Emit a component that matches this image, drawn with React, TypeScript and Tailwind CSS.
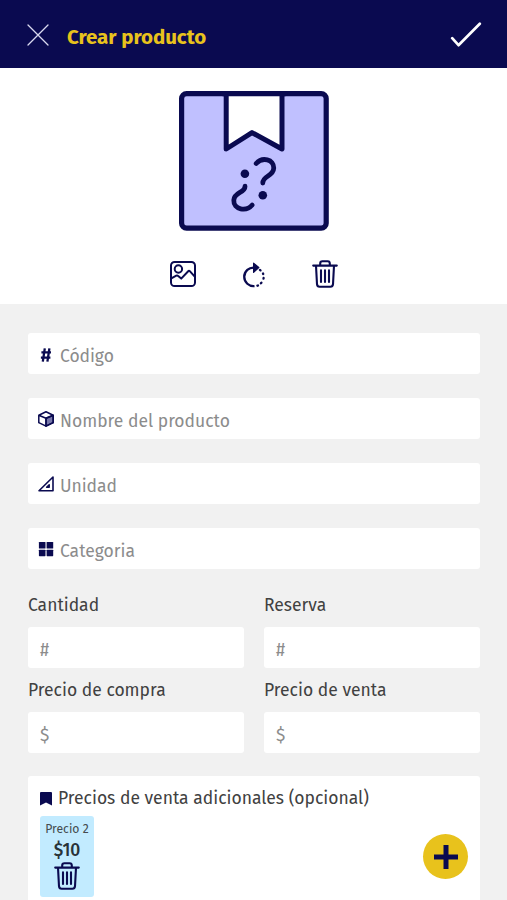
import type { ReactNode } from 'react';

const NAVY = '#0a0a50';

function TrashIcon({ className }: { className: string }) {
  return (
    <svg viewBox="0 0 26 28" className={className} fill="none" stroke={NAVY} strokeWidth="2.1" strokeLinecap="round" strokeLinejoin="round">
      <path d="M1.2 5.6H24.8M8.2 5.4V3.6Q8.2 1.2 10.4 1.2H15.6Q17.8 1.2 17.8 3.6V5.4M4 5.8L5 24.2Q5.2 26.8 7.6 26.8H18.4Q20.8 26.8 21 24.2L22 5.8M9 10.4V22M13 10.4V22M17 10.4V22" />
    </svg>
  );
}

function ImageIcon() {
  return (
    <svg viewBox="0 0 26 26" className="h-[26px] w-[26px]" fill="none" stroke={NAVY} strokeWidth="2" strokeLinejoin="round">
      <rect x="1" y="1" width="24" height="24" rx="3.6" />
      <circle cx="8.4" cy="8" r="3.7" />
      <path d="M1.3 17.4L6.3 14.7Q7.3 14.2 8.2 15.1L11.2 17.6L18.2 10.2Q19 9.4 19.8 10.2L25 15.9" />
    </svg>
  );
}

function RotateIcon() {
  return (
    <svg viewBox="0 0 24 26" className="mt-[2px] h-[26px] w-[24px]" fill="none" stroke={NAVY} strokeWidth="2.3">
      <path d="M12.5 5.6A9.3 9.3 0 1 0 12.5 24.1" />
      <path d="M15.4 23.7L16 23.5M18.9 21.3L19.4 20.7M21.5 16.6L21.6 16M21.2 12L21 11.5M18.5 8.4L17.9 7.9" strokeLinecap="round" />
      <path d="M11.6 1.2L16.8 5.5L11.6 10.4Z" fill={NAVY} strokeWidth="1.2" strokeLinejoin="round" />
    </svg>
  );
}

function BoxPicture() {
  return (
    <svg viewBox="0 0 150 140" className="h-[140px] w-[150px]" fill="none" stroke={NAVY} strokeLinecap="round" strokeLinejoin="round">
      <rect x="2.6" y="2.6" width="144.6" height="134.6" rx="5" fill="#c0c0ff" strokeWidth="5.2" />
      <path d="M47.2 3V58L73 41.6L103 58V3" fill="#fff" strokeWidth="5" />
      <path d="M44 2.6H106" strokeWidth="5.2" />
      <path d="M77.2 72.5C83 65.8 95.2 67.8 94.7 77.4C94.3 85.5 83.8 84.5 83.8 92" strokeWidth="4.8" />
      <circle cx="83.8" cy="104.2" r="4.3" fill={NAVY} stroke="none" />
      <path d="M73.2 114C67.4 120.7 54.3 119 54.8 109.2C55.2 100.9 66.2 102 66 95.2" strokeWidth="4.8" />
      <circle cx="65.9" cy="82.8" r="4.3" fill={NAVY} stroke="none" />
    </svg>
  );
}

function HashIcon() {
  return (
    <svg viewBox="0 0 16 16" className="mt-[5px] h-4 w-4" fill="none" stroke={NAVY} strokeWidth="2.3">
      <path d="M6.8 1.4L4.8 14.6M11.4 1.4L9.4 14.6M3.4 5.3H13M2.9 10.6H12.4" />
    </svg>
  );
}

function CubeIcon() {
  return (
    <svg viewBox="0 0 16 16" className="mt-[2px] h-4 w-4" fill="none" stroke={NAVY} strokeWidth="1.5" strokeLinejoin="round">
      <path d="M8 7.2L15.2 4.2V11.7L8 15.2Z" fill="#7777aa" />
      <path d="M.8 4.2L8 .8L15.2 4.2V11.7L8 15.2L.8 11.7ZM.8 4.2L8 7.2L15.2 4.2M8 7.2V15" />
    </svg>
  );
}

function SquareRulerIcon() {
  return (
    <svg viewBox="0 0 16 16" className="mt-[2px] h-4 w-4" fill="none" stroke={NAVY} strokeWidth="1.6" strokeLinejoin="round">
      <path d="M1 14.8L15 1V14.8Z" />
      <path d="M8.6 11.2L11.2 8.8V11.2Z" fill={NAVY} strokeWidth="1.5" />
    </svg>
  );
}

function GridIcon() {
  return (
    <svg viewBox="0 0 16 16" className="mt-[3px] h-4 w-4" fill={NAVY}>
      <rect x=".9" y="1" width="6.6" height="6.5" rx=".6" />
      <rect x="8.6" y="1" width="6.6" height="6.5" rx=".6" />
      <rect x=".9" y="8.7" width="6.6" height="6.5" rx=".6" />
      <rect x="8.6" y="8.7" width="6.6" height="6.5" rx=".6" />
    </svg>
  );
}

function Field({ icon, label, spacing }: { icon: ReactNode; label: string; spacing: string }) {
  return (
    <div className="flex h-[41px] items-center rounded-[3px] bg-white pl-[10px]">
      <div className="mb-[2px]">{icon}</div>
      <span className={`ml-[6px] mt-[6px] text-[17.5px] leading-6 text-[#8c8c8c] ${spacing}`}>{label}</span>
    </div>
  );
}

function AmountField({ label, symbol }: { label: string; symbol: string }) {
  return (
    <div>
      <div className="h-6 whitespace-nowrap pt-[2px] text-[17.5px] leading-6 text-[#414141]">{label}</div>
      <div className="mt-[11px] flex h-[41px] items-center rounded-[3px] bg-white pl-3 pt-[8px] text-[17.5px] text-[#8c8c8c]">
        {symbol}
      </div>
    </div>
  );
}

export default function App() {
  return (
    <div className="flex h-[900px] w-[507px] flex-col overflow-hidden bg-[#f1f1f1] font-['Fira_Sans','Noto_Sans',sans-serif]">
      <header className="flex h-[68px] shrink-0 items-center bg-[#0a0a50] pl-[27px] pr-[25px]">
        <svg viewBox="0 0 22 22" className="mt-[1px] h-[22px] w-[22px]" fill="none" stroke="#d9d9ee" strokeWidth="1.3" strokeLinecap="round">
          <path d="M1 1L21 21M21 1L1 21" />
        </svg>
        <h1 className="ml-[18px] mt-[5px] whitespace-nowrap text-[20.5px] font-bold leading-7 tracking-[-0.05px] text-[#e8c21c]">Crear producto</h1>
        <svg viewBox="0 0 32 26" className="ml-auto mt-[1px] h-[26px] w-8" fill="none" stroke="#fff" strokeWidth="2.7" strokeLinecap="round" strokeLinejoin="round">
          <path d="M2.2 16.2L8.5 23.2L29.8 1.8" />
        </svg>
      </header>

      <section className="flex h-[236px] shrink-0 flex-col items-center bg-white pt-[23px]">
        <BoxPicture />
        <div className="mt-[29px] flex h-7 items-center justify-center gap-[46px]">
          <ImageIcon />
          <RotateIcon />
          <TrashIcon className="h-[28px] w-[26px]" />
        </div>
      </section>

      <main className="flex flex-1 flex-col pl-[28px] pr-[27px] pt-[29px]">
        <div className="flex flex-col gap-6">
          <Field icon={<HashIcon />} label="Código" spacing="tracking-[-0.05px]" />
          <Field icon={<CubeIcon />} label="Nombre del producto" spacing="tracking-[0px]" />
          <Field icon={<SquareRulerIcon />} label="Unidad" spacing="tracking-[-0.05px]" />
          <Field icon={<GridIcon />} label="Categoria" spacing="tracking-[0px]" />
        </div>

        <div className="mt-[23px] grid grid-cols-2 gap-x-5 gap-y-[9px]">
          <AmountField label="Cantidad" symbol="#" />
          <AmountField label="Reserva" symbol="#" />
          <AmountField label="Precio de compra" symbol="$" />
          <AmountField label="Precio de venta" symbol="$" />
        </div>

        <section className="mt-[23px] h-[124px] rounded-t-[3px] bg-white px-3 pt-[10px]">
          <div className="flex h-6 items-center">
            <svg viewBox="0 0 12 14" className="mt-[2px] h-[14px] w-3" fill={NAVY}>
              <path d="M0 1Q0 0 1 0H11Q12 0 12 1V13.6L6 10.6L0 13.6Z" />
            </svg>
            <h2 className="ml-[6px] mt-[2px] whitespace-nowrap text-[17.5px] leading-6 text-[#414141]">Precios de venta adicionales (opcional)</h2>
          </div>
          <div className="mt-[6px] flex items-center justify-between">
            <div className="flex h-[81px] w-[54px] flex-col items-center rounded-[3px] bg-[#c2ebff] pt-[5px]">
              <span className="whitespace-nowrap text-[12.2px] leading-4 text-[#454b50]">Precio 2</span>
              <span className="mt-[4px] text-[17.5px] font-medium leading-[20px] tracking-[-0.1px] text-[#293338]">$10</span>
              <TrashIcon className="mt-[1px] h-[28px] w-[26px]" />
            </div>
            <button className="flex h-[45px] w-[45px] items-center justify-center rounded-full bg-[#e8c21c]">
              <svg viewBox="0 0 24 24" className="h-6 w-6" stroke={NAVY} strokeWidth="5">
                <path d="M12 0V24M0 12H24" />
              </svg>
            </button>
          </div>
        </section>
      </main>
    </div>
  );
}
